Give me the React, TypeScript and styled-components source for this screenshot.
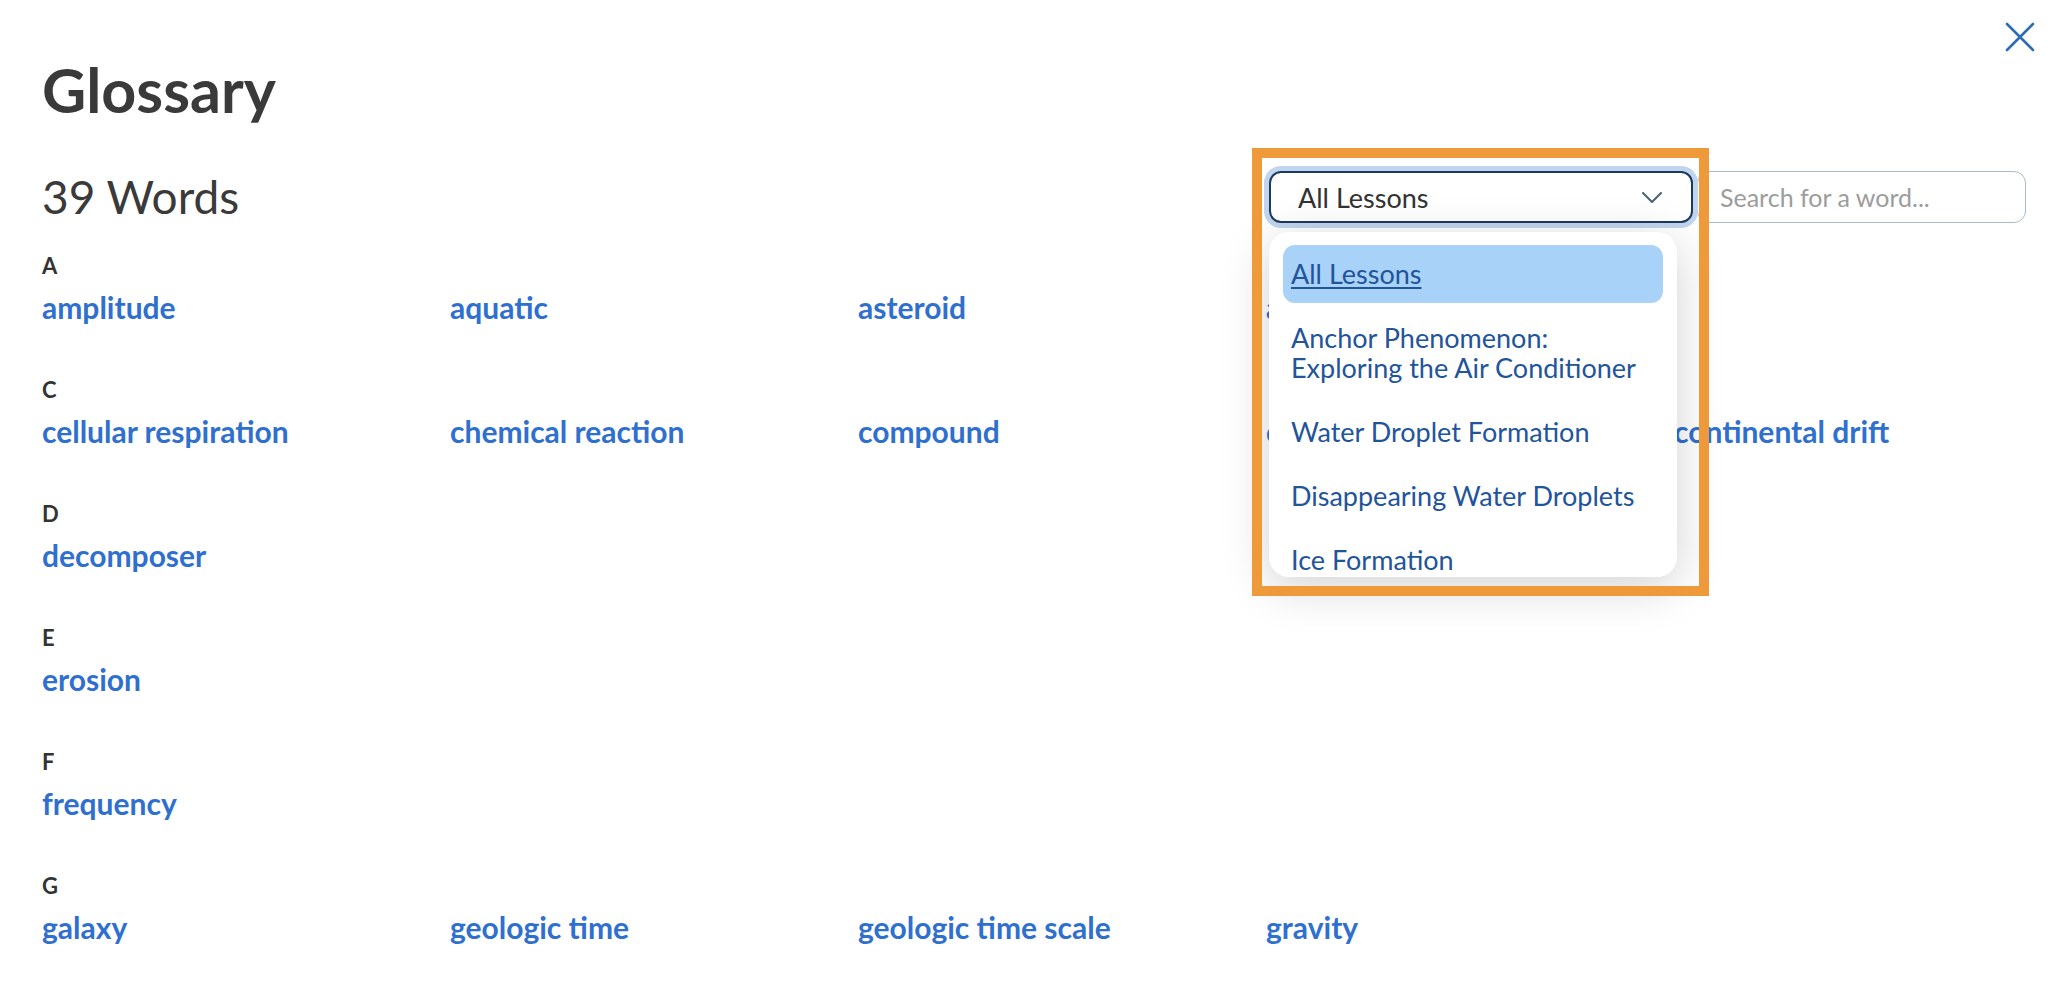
import React from "react";
import styled, { createGlobalStyle } from "styled-components";

const GlobalStyle = createGlobalStyle`
  html, body { margin: 0; padding: 0; background: #ffffff; overflow: hidden; }
  body { font-family: Lato, "Open Sans", Arial, sans-serif; }
  * { box-sizing: border-box; }
`;

const Page = styled.div`
  position: relative;
  padding: 0 21px 0 42px;
  width: 2056px;
  height: 986px;
  overflow: hidden;
`;

const TopBar = styled.div`
  display: flex;
  justify-content: flex-end;
  height: 60px;
`;

const CloseButton = styled.button`
  margin-top: 22px;
  width: 30px;
  height: 30px;
  padding: 0;
  border: 0;
  background: transparent;
  cursor: pointer;
  display: flex;
`;

const Title = styled.h1`
  margin: 0;
  font-size: 61px;
  line-height: 60px;
  font-weight: 700;
  color: #3a3a3a;
`;

const Toolbar = styled.div`
  margin-top: 51px;
  height: 52px;
  display: flex;
  align-items: center;
  justify-content: space-between;
  padding-right: 9px;
`;

const WordCount = styled.div`
  font-size: 46px;
  line-height: 52px;
  color: #3a3a3a;
`;

const Controls = styled.div`
  position: relative;
  display: flex;
  gap: 4px;
  height: 52px;
`;

const SelectBox = styled.div`
  position: relative;
  z-index: 2;
  width: 424px;
  height: 52px;
  border: 2px solid #1c3a5e;
  border-radius: 12px;
  box-shadow: 0 0 0 5px #c2d5ee;
  background: #fff;
  display: flex;
  align-items: center;
  justify-content: space-between;
  padding: 0 29px 0 27px;
  font-size: 27px;
  color: #333;
`;

const SearchInput = styled.input`
  width: 329px;
  height: 52px;
  border: 1.5px solid #a8bbc8;
  border-radius: 12px;
  padding: 0 0 0 22px;
  font-family: inherit;
  font-size: 25px;
  color: #333;
  outline: none;
  &::placeholder { color: #9c9c9c; }
`;

const Menu = styled.div`
  position: absolute;
  z-index: 3;
  top: 61px;
  left: 0;
  width: 408px;
  height: 345px;
  background: #fff;
  border-radius: 20px;
  box-shadow: 0 10px 48px rgba(0, 0, 0, 0.18);
  padding: 13px 14px;
  overflow: hidden;
  display: flex;
  flex-direction: column;
  gap: 6px;
`;

const MenuItem = styled.div<{ $active?: boolean }>`
  flex: none;
  padding: 14px 8px;
  line-height: 30px;
  font-size: 27px;
  color: #22549a;
  border-radius: 12px;
  background: ${(p) => (p.$active ? "#a9d2f8" : "transparent")};
  text-decoration: ${(p) => (p.$active ? "underline" : "none")};
  text-underline-offset: 3px;
  text-decoration-thickness: 1.5px;
  white-space: nowrap;
`;

const Frame = styled.div`
  position: absolute;
  z-index: 4;
  left: -17px;
  top: -23px;
  width: 457px;
  height: 448px;
  border: 10px solid #ef9a3a;
  pointer-events: none;
`;

const Sections = styled.div`
  margin-top: 30px;
`;

const Section = styled.section`
  margin-bottom: 53px;
`;

const Letter = styled.h2`
  margin: 0;
  font-size: 22px;
  line-height: 26px;
  font-weight: 700;
  color: #333;
`;

const WordGrid = styled.div`
  margin-top: 11px;
  display: grid;
  grid-template-columns: repeat(5, 408px);
`;

const WordLink = styled.a`
  font-size: 30px;
  line-height: 34px;
  font-weight: 700;
  color: #2f70cf;
  text-decoration: none;
  white-space: nowrap;
`;

const sections: { letter: string; words: string[] }[] = [
  { letter: "A", words: ["amplitude", "aquatic", "asteroid", "atom"] },
  {
    letter: "C",
    words: ["cellular respiration", "chemical reaction", "compound", "condensation", "continental drift"],
  },
  { letter: "D", words: ["decomposer"] },
  { letter: "E", words: ["erosion"] },
  { letter: "F", words: ["frequency"] },
  { letter: "G", words: ["galaxy", "geologic time", "geologic time scale", "gravity"] },
];

const lessons = [
  "All Lessons",
  "Anchor Phenomenon:\nExploring the Air Conditioner",
  "Water Droplet Formation",
  "Disappearing Water Droplets",
  "Ice Formation",
  "Ice Melting",
];

export default function App() {
  return (
    <>
      <GlobalStyle />
      <Page>
        <TopBar>
          <CloseButton aria-label="Close">
            <svg width="30" height="30" viewBox="0 0 30 30">
              <path d="M2 2 L28 28 M28 2 L2 28" stroke="#2e6db4" strokeWidth="2.6" strokeLinecap="round" />
            </svg>
          </CloseButton>
        </TopBar>
        <Title>Glossary</Title>
        <Toolbar>
          <WordCount>39 Words</WordCount>
          <Controls>
            <SelectBox>
              <span>All Lessons</span>
              <svg width="20" height="11" viewBox="0 0 20 11">
                <path d="M1 1 L10 10 L19 1" fill="none" stroke="#4b6377" strokeWidth="2" strokeLinecap="round" strokeLinejoin="round" />
              </svg>
            </SelectBox>
            <SearchInput placeholder="Search for a word..." />
            <Menu>
              {lessons.map((l, i) => (
                <MenuItem key={l} $active={i === 0}>
                  {l.split("\n").map((line) => (
                    <div key={line}>{line}</div>
                  ))}
                </MenuItem>
              ))}
            </Menu>
            <Frame />
          </Controls>
        </Toolbar>
        <Sections>
          {sections.map((s) => (
            <Section key={s.letter}>
              <Letter>{s.letter}</Letter>
              <WordGrid>
                {s.words.map((w) => (
                  <WordLink key={w} href="#">
                    {w}
                  </WordLink>
                ))}
              </WordGrid>
            </Section>
          ))}
        </Sections>
      </Page>
    </>
  );
}
